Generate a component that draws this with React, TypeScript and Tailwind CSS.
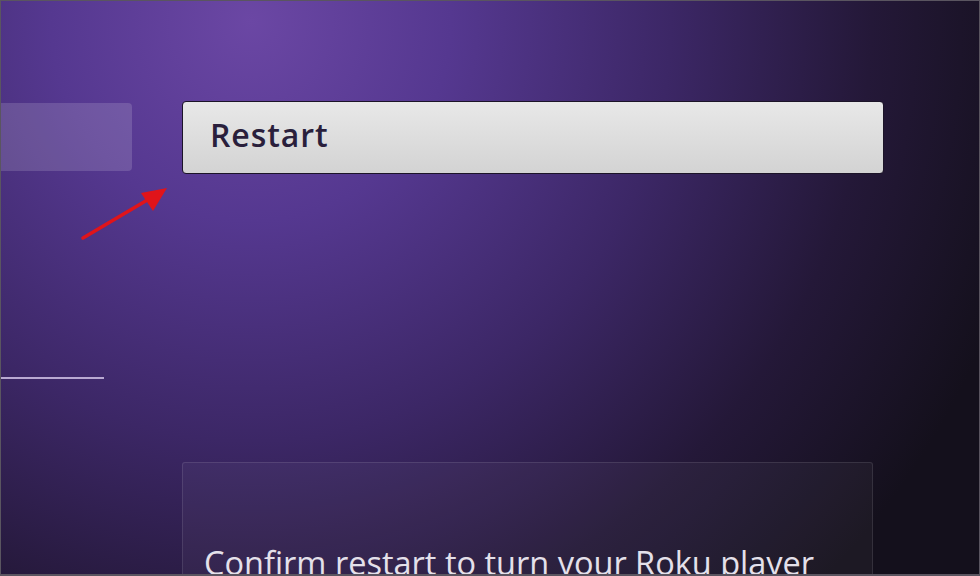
import { ReactNode } from 'react';

function Frame({ children }: { children: ReactNode }) {
  return (
    <div className="relative w-[980px] h-[576px] overflow-hidden border border-b-2 border-[#5a5560] bg-[radial-gradient(circle_at_250px_20px,#6b47a4_0px,#553890_200px,#3c2766_420px,#241838_620px,#14101c_800px)]">
      {children}
    </div>
  );
}

function Arrow() {
  // red annotation arrow pointing at the Restart button
  return (
    <svg className="absolute left-[78px] top-[182px]" width="92" height="60" viewBox="0 0 92 60">
      <line x1="4" y1="55" x2="70" y2="16" stroke="#e0141a" strokeWidth="3.5" strokeLinecap="round" />
      <polygon points="88,5 62,10 74,28" fill="#e0141a" />
    </svg>
  );
}

export default function App() {
  return (
    <Frame>
      <div className="flex h-full font-['Open_Sans',sans-serif]">
        <div className="w-[131px] shrink-0 pt-[102px] flex flex-col">
          <div className="h-[68px] shrink-0 rounded-r-sm bg-white/15" />
          <div className="mt-[206px] h-[2px] w-[103px] shrink-0 bg-[#b9a9d2]" />
        </div>
        <div className="ml-[50px] w-[702px] pt-[100px] flex flex-col">
          <div className="h-[73px] shrink-0 rounded-[4px] border border-[#1c1428] bg-gradient-to-b from-[#e8e8e8] to-[#d3d3d3] flex items-center px-[27px] pb-[5px]">
            <span className="text-[32px] font-semibold tracking-[0.9px] text-[#2a1f3c] leading-none">Restart</span>
          </div>
          <div className="mt-[288px] mr-[11px] h-[130px] shrink-0 rounded-[3px] border border-white/10 bg-white/[0.04] px-[21px] pt-[84px]">
            <p className="text-[32.5px] leading-none text-[#e4e0ea] whitespace-nowrap">Confirm restart to turn your Roku player</p>
          </div>
        </div>
      </div>
      <Arrow />
    </Frame>
  );
}
